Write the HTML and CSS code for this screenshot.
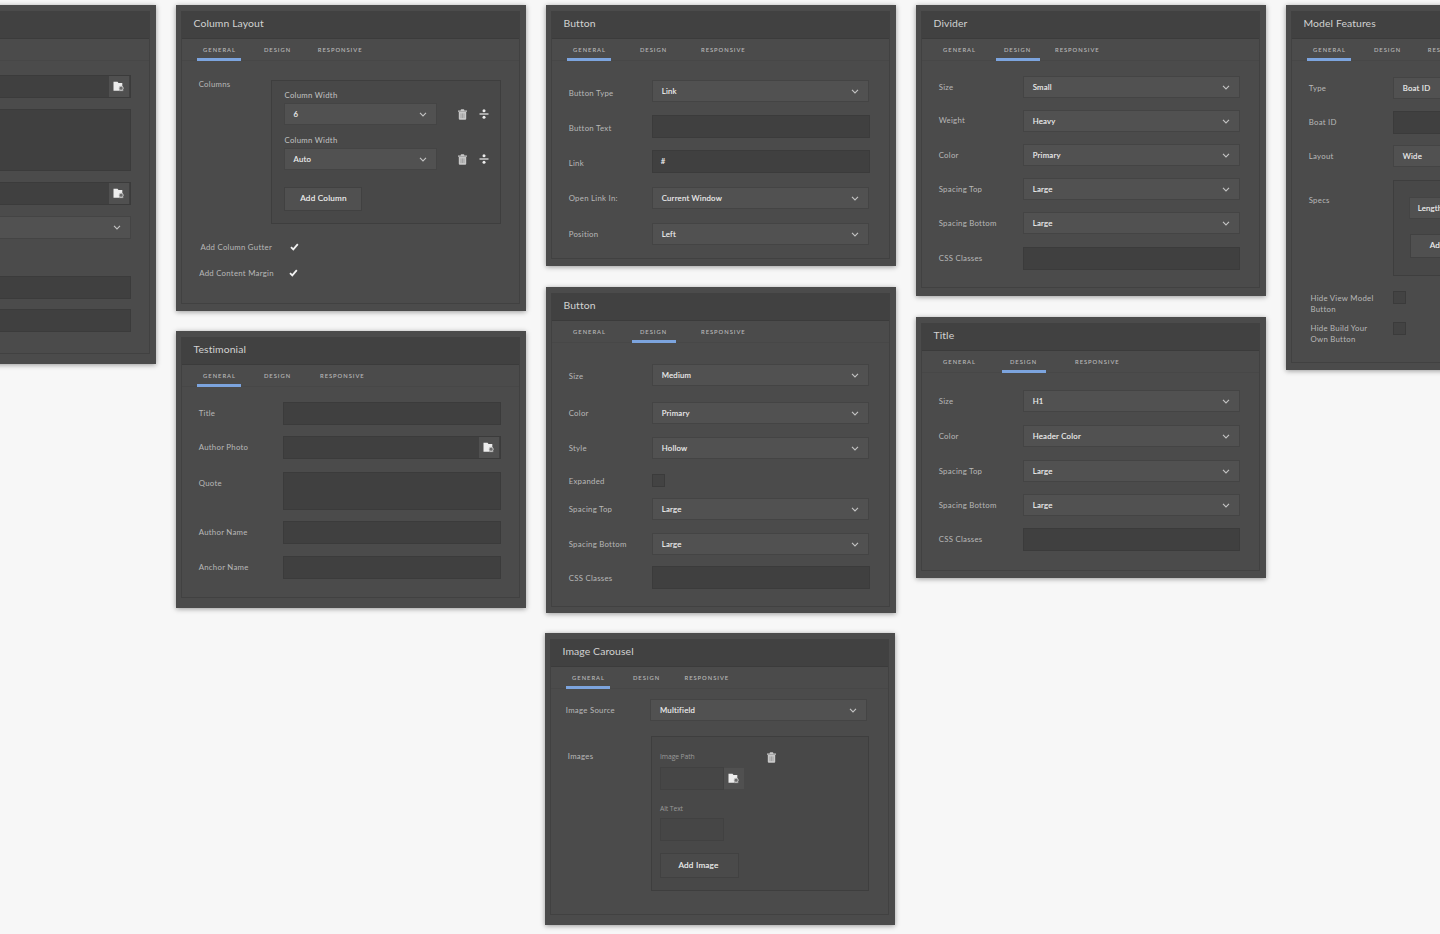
FILE: index.html
```html
<!DOCTYPE html>
<html lang="en">
<head>
<meta charset="utf-8">
<title>Component dialogs</title>
<link rel="stylesheet" href="styles.css">
</head>
<body>
<svg class="sprite" width="0" height="0" aria-hidden="true">
  <symbol id="chevron" viewBox="0 0 8 5"><path d="M1 .8 4 3.9 7 .8" fill="none" stroke="currentColor" stroke-width="1.1"/></symbol>
  <symbol id="trash" viewBox="0 0 9 11"><path d="M0 1.5h2.7V.9q0-.7.7-.7h2.2q.7 0 .7.7v.6H9v1.2H0z" fill="#c8c8c8"/><path d="M.8 3.1h7.4v6.6q0 1-1 1H1.8q-1 0-1-1z" fill="#c8c8c8"/><path d="M3 4.4v4.6M4.5 4.4v4.6M6 4.4v4.6" stroke="#8a8a8a" stroke-width=".6"/></symbol>
  <symbol id="move" viewBox="0 0 10 10"><path d="M.5 5h9" stroke="#ececec" stroke-width="1.2"/><circle cx="5" cy="1.7" r="1.5" fill="#ececec"/><circle cx="5" cy="8.3" r="1.5" fill="#ececec"/></symbol>
  <symbol id="folder" viewBox="0 0 11 11"><path d="M.5.8h4l1 1.2h3.8v4L6 6.4v3.4H.5z" fill="#ededed"/><circle cx="8.1" cy="7.2" r="2.1" fill="#6a6a6a" stroke="#d2d2d2" stroke-width=".9"/><path d="M6 9.6h4.3" stroke="#c4c4c4" stroke-width=".8"/></symbol>
  <symbol id="check" viewBox="0 0 9 8"><path d="M1 4.2 3.3 6.4 7.8 1.2" fill="none" stroke="#f2f2f2" stroke-width="1.8"/></symbol>
</svg>
<main class="board">
  <div class="stack">
    <section class="panel banner">
      <div class="frame">
        <h2 class="title"></h2><nav class="tabs"></nav>
        <div class="form">
          <div class="row"><span class="label"></span><div class="input"><span class="picker"><svg><use href="#folder"/></svg></span></div></div>
          <div class="row"><span class="label"></span><div class="input"></div></div>
          <div class="row"><span class="label"></span><div class="input"><span class="picker"><svg><use href="#folder"/></svg></span></div></div>
          <div class="row"><span class="label"></span><div class="select"><svg><use href="#chevron"/></svg></div></div>
          <div class="row"><span class="label"></span><div class="input"></div></div>
          <div class="row"><span class="label"></span><div class="input"></div></div>
        </div>
      </div>
    </section>
  </div>

  <div class="stack">
    <section class="panel columns">
      <div class="frame">
        <h2 class="title">Column Layout</h2>
        <nav class="tabs"><span class="tab on">GENERAL</span><span class="tab">DESIGN</span><span class="tab last">RESPONSIVE</span></nav>
        <div class="form">
          <div class="row"><span class="label">Columns</span>
            <div class="box">
              <div class="sub">Column Width</div>
              <div class="line"><div class="select">6<svg><use href="#chevron"/></svg></div><svg class="trash"><use href="#trash"/></svg><svg class="move"><use href="#move"/></svg></div>
              <div class="sub">Column Width</div>
              <div class="line"><div class="select">Auto<svg><use href="#chevron"/></svg></div><svg class="trash"><use href="#trash"/></svg><svg class="move"><use href="#move"/></svg></div>
              <button class="button">Add Column</button>
            </div>
          </div>
          <div class="row"><span class="label">Add Column Gutter</span><svg class="check"><use href="#check"/></svg></div>
          <div class="row"><span class="label">Add Content Margin</span><svg class="check"><use href="#check"/></svg></div>
        </div>
      </div>
    </section>
    <section class="panel testimonial">
      <div class="frame">
        <h2 class="title">Testimonial</h2>
        <nav class="tabs"><span class="tab on">GENERAL</span><span class="tab">DESIGN</span><span class="tab last">RESPONSIVE</span></nav>
        <div class="form">
          <div class="row"><span class="label">Title</span><div class="input"></div></div>
          <div class="row"><span class="label">Author Photo</span><div class="input"><span class="picker"><svg><use href="#folder"/></svg></span></div></div>
          <div class="row"><span class="label">Quote</span><div class="input"></div></div>
          <div class="row"><span class="label">Author Name</span><div class="input"></div></div>
          <div class="row"><span class="label">Anchor Name</span><div class="input"></div></div>
        </div>
      </div>
    </section>
  </div>

  <div class="stack">
    <section class="panel link-button">
      <div class="frame">
        <h2 class="title">Button</h2>
        <nav class="tabs wide"><span class="tab on">GENERAL</span><span class="tab">DESIGN</span><span class="tab last">RESPONSIVE</span></nav>
        <div class="form">
          <div class="row"><span class="label">Button Type</span><div class="select">Link<svg><use href="#chevron"/></svg></div></div>
          <div class="row"><span class="label">Button Text</span><div class="input"></div></div>
          <div class="row"><span class="label">Link</span><div class="input">#</div></div>
          <div class="row"><span class="label">Open Link In:</span><div class="select">Current Window<svg><use href="#chevron"/></svg></div></div>
          <div class="row"><span class="label">Position</span><div class="select">Left<svg><use href="#chevron"/></svg></div></div>
        </div>
      </div>
    </section>
    <section class="panel button-design">
      <div class="frame">
        <h2 class="title">Button</h2>
        <nav class="tabs wide"><span class="tab">GENERAL</span><span class="tab on">DESIGN</span><span class="tab last">RESPONSIVE</span></nav>
        <div class="form">
          <div class="row"><span class="label">Size</span><div class="select">Medium<svg><use href="#chevron"/></svg></div></div>
          <div class="row"><span class="label">Color</span><div class="select">Primary<svg><use href="#chevron"/></svg></div></div>
          <div class="row"><span class="label">Style</span><div class="select">Hollow<svg><use href="#chevron"/></svg></div></div>
          <div class="row"><span class="label">Expanded</span><span class="checkbox"></span></div>
          <div class="row"><span class="label">Spacing Top</span><div class="select">Large<svg><use href="#chevron"/></svg></div></div>
          <div class="row"><span class="label">Spacing Bottom</span><div class="select">Large<svg><use href="#chevron"/></svg></div></div>
          <div class="row"><span class="label">CSS Classes</span><div class="input"></div></div>
        </div>
      </div>
    </section>
    <section class="panel carousel">
      <div class="frame">
        <h2 class="title">Image Carousel</h2>
        <nav class="tabs"><span class="tab on">GENERAL</span><span class="tab">DESIGN</span><span class="tab last">RESPONSIVE</span></nav>
        <div class="form">
          <div class="row"><span class="label">Image Source</span><div class="select">Multifield<svg><use href="#chevron"/></svg></div></div>
          <div class="row"><span class="label">Images</span>
            <div class="box">
              <div class="head"><span class="dim">Image Path</span><svg class="trash"><use href="#trash"/></svg></div>
              <div class="pair"><div class="input faint"></div><span class="picker"><svg><use href="#folder"/></svg></span></div>
              <div class="dim">Alt Text</div>
              <div class="input faint"></div>
              <button class="button">Add Image</button>
            </div>
          </div>
        </div>
      </div>
    </section>
  </div>

  <div class="stack">
    <section class="panel divider">
      <div class="frame">
        <h2 class="title">Divider</h2>
        <nav class="tabs"><span class="tab">GENERAL</span><span class="tab on">DESIGN</span><span class="tab last">RESPONSIVE</span></nav>
        <div class="form">
          <div class="row"><span class="label">Size</span><div class="select">Small<svg><use href="#chevron"/></svg></div></div>
          <div class="row"><span class="label">Weight</span><div class="select">Heavy<svg><use href="#chevron"/></svg></div></div>
          <div class="row"><span class="label">Color</span><div class="select">Primary<svg><use href="#chevron"/></svg></div></div>
          <div class="row"><span class="label">Spacing Top</span><div class="select">Large<svg><use href="#chevron"/></svg></div></div>
          <div class="row"><span class="label">Spacing Bottom</span><div class="select">Large<svg><use href="#chevron"/></svg></div></div>
          <div class="row"><span class="label">CSS Classes</span><div class="input"></div></div>
        </div>
      </div>
    </section>
    <section class="panel heading">
      <div class="frame">
        <h2 class="title">Title</h2>
        <nav class="tabs wide"><span class="tab">GENERAL</span><span class="tab on">DESIGN</span><span class="tab last">RESPONSIVE</span></nav>
        <div class="form">
          <div class="row"><span class="label">Size</span><div class="select">H1<svg><use href="#chevron"/></svg></div></div>
          <div class="row"><span class="label">Color</span><div class="select">Header Color<svg><use href="#chevron"/></svg></div></div>
          <div class="row"><span class="label">Spacing Top</span><div class="select">Large<svg><use href="#chevron"/></svg></div></div>
          <div class="row"><span class="label">Spacing Bottom</span><div class="select">Large<svg><use href="#chevron"/></svg></div></div>
          <div class="row"><span class="label">CSS Classes</span><div class="input"></div></div>
        </div>
      </div>
    </section>
  </div>

  <div class="stack">
    <section class="panel model">
      <div class="frame">
        <h2 class="title">Model Features</h2>
        <nav class="tabs"><span class="tab on">GENERAL</span><span class="tab">DESIGN</span><span class="tab last">RESPONSIVE</span></nav>
        <div class="form">
          <div class="row"><span class="label">Type</span><div class="select">Boat ID<svg><use href="#chevron"/></svg></div></div>
          <div class="row"><span class="label">Boat ID</span><div class="input"></div></div>
          <div class="row"><span class="label">Layout</span><div class="select">Wide<svg><use href="#chevron"/></svg></div></div>
          <div class="row"><span class="label">Specs</span>
            <div class="box"><div class="select">Length</div><button class="button">Add</button></div>
          </div>
          <div class="row"><span class="label">Hide View Model<br>Button</span><span class="checkbox"></span></div>
          <div class="row"><span class="label">Hide Build Your<br>Own Button</span><span class="checkbox"></span></div>
        </div>
      </div>
    </section>
  </div>
</main>
</body>
</html>
```
FILE: styles.css
```css
* { box-sizing: border-box; }
html, body { margin: 0; height: 934px; overflow: hidden; background: #f7f7f7; }
body { font-family: Lato, "Open Sans", sans-serif; font-size: 7.8px; letter-spacing: .27px; color: #b8b8b8; }
svg { display: block; }
.sprite { position: absolute; }

.board { display: flex; gap: 20px; width: 1634px; margin-left: -194px; padding-top: 5px; overflow: hidden; height: 934px; }
.stack { width: 350px; flex: none; display: flex; flex-direction: column; }

.panel { --h: 300px; --end: 7px; height: var(--h); width: 350px; padding: 6px 6px var(--end) 5px; background: #4b4b4b; box-shadow: 0 1px 5px rgba(0,0,0,.38); flex: none; }
.frame { height: 100%; border: 1px solid #414141; }
.title { margin: 0; height: 27px; padding-left: 11.5px; line-height: 22px; font-size: 10.4px; font-weight: 400; letter-spacing: .1px; color: #d2d2d2; background: #414141; border-bottom: 1px solid #3b3b3b; }

.tabs { --design: 15px; --resp: 17.8px; display: flex; height: 22px; padding-left: 15px; border-bottom: 1px solid #474747; font-size: 5.8px; font-weight: 400; letter-spacing: 1px; line-height: 22px; color: #b8b8b8; -webkit-text-stroke: .1px currentColor; }
.tabs.wide { --design: 21px; }
.tab { width: 44px; height: 22px; padding-left: 1px; text-align: center; border-bottom: 2.5px solid transparent; white-space: nowrap; }
.tab.on { border-bottom: 3px solid #7ca4de; }
.tab + .tab { margin-left: var(--design); padding: 0 1px 0 0; }
.tab.last { margin-left: var(--resp); width: auto; padding-left: 0; }

.form { display: grid; align-content: start; padding: var(--top, 15px) 0 0 16.7px; }
.row { display: flex; align-items: flex-start; height: 100%; --ly: 5px; }
.label { flex: none; width: 84px; margin-top: calc(var(--ly) - .3px); line-height: 12px; white-space: nowrap; }

.select, .input { position: relative; width: 217px; height: 22px; padding-left: 9px; line-height: 20px; color: #f2f2f2; letter-spacing: .22px; border: 1px solid #444; white-space: nowrap; -webkit-text-stroke: .1px currentColor; }
.select { display: flex; align-items: center; padding-right: 9px; background: #515151; }
.select svg { width: 8px; height: 5px; margin-left: auto; color: #c4c4c4; }
.input { height: 23px; width: 218px; background: #404040; border-color: #3b3b3b; padding-left: 8px; line-height: 21px; }
.input .picker { position: absolute; right: 1px; top: 0; }
.picker { display: flex; align-items: center; justify-content: center; width: 20px; height: 21px; background: #505050; }
.picker svg { width: 11px; height: 11px; }
.box { background: #484848; border: 1px solid #3e3e3e; }
.trash { width: 9px; height: 11px; flex: none; }
.move { width: 10px; height: 10px; flex: none; }
.check { width: 9px; height: 8px; }
.checkbox { width: 13px; height: 13px; background: #434343; border: 1px solid #3b3b3b; }
.button { display: block; padding: 0 0 1px; font: 400 8.2px/21px Lato, sans-serif; letter-spacing: .2px; color: #f4f4f4; background: #505050; border: 1px solid #414141; -webkit-text-stroke: .1px currentColor; }
.sub { line-height: 12px; color: #c2c2c2; }
.dim { font: 400 6.8px/12px "Open Sans", sans-serif; letter-spacing: -.1px; color: #9a9a9a; }

/* First column */
.banner { --h: 359px; --end: 10px; }
.banner .form { --top: 14px; grid-template-rows: 34px 73px 34px 60px 33px 23px; }
.banner .label { width: 84px; }
.banner .row:nth-child(2) .input { height: 62px; }
.banner .select { height: 23px; width: 218px; }

/* Column layout */
.columns { --h: 306px; }
.columns .form { --top: 19px; grid-template-rows: 162px 26px 20px; }
.columns .row:nth-child(1) { --ly: -1.5px; }
.columns .row:nth-child(1) .label { width: 72.3px; }
.columns .box { width: 230px; height: 144px; padding: 8px 0 0 12.5px; }
.columns .select { width: 153px; padding-left: 8px; }
.columns .line { display: flex; align-items: center; margin: 2px 0 9px; }
.columns .line .trash { margin-left: 20.7px; }
.columns .line .move { margin-left: 12px; }
.columns .sub + .line { height: 22px; }
.columns .button { width: 78px; height: 24px; margin-top: 17px; }
.columns .row:nth-child(n+2) { --ly: -.7px; }
.columns .row:nth-child(2) .label { padding-left: 1.8px; width: 91px; }
.columns .row:nth-child(3) .label { width: 90px; padding-left: .5px; }
.columns .check { margin-top: 1px; }

/* Testimonial */
.testimonial { --h: 277px; --end: 10px; margin-top: 20px; }
.testimonial .tabs { --resp: 20px; }
.testimonial .form { grid-template-rows: 34px 36px 49px 35px 23px; }
.testimonial .row:nth-child(3) .input { height: 38px; }

/* Link button */
.link-button { --h: 261px; }
.link-button .tabs, .button-design .tabs { --resp: 25px; }
.link-button .form { --top: 19px; grid-template-rows: 35px 35px 37px 36px 23px; }
.link-button .row { --ly: 7px; }
.link-button .row:nth-child(n+4) { --ly: 5px; }
.link-button .label, .button-design .label { width: 83px; }

.button-design { --h: 326px; --end: 6px; margin-top: 21px; }
.button-design .form { --top: 21px; grid-template-rows: 38px 35px 37px 24px 35px 33px 23px; }
.button-design .row:nth-child(1) { --ly: 6px; }
.button-design .row:nth-child(4) { --ly: 1px; }
.button-design .row:nth-child(7) { --ly: 6px; }

/* Carousel */
.carousel { --h: 292px; --end: 10px; margin: 20px 0 0 -1px; }
.carousel .tabs { --resp: 15.5px; }
.carousel .form { --top: 10px; padding-left: 14.8px; grid-template-rows: 37px 155px; }
.carousel .label { width: 84.2px; }
.carousel .row:nth-child(2) { --ly: 14px; }
.carousel .row:nth-child(2) .label { padding-left: 2px; width: 85.2px; }
.carousel .box { width: 218px; height: 155px; padding: 14px 0 0 8px; }
.head { display: flex; align-items: center; height: 12px; }
.head .dim { width: 107px; }
.pair { display: flex; align-items: center; margin: 4px 0 13px; }
.faint { width: 64px; background: #464646; border-color: #414141; }
.carousel .box > .input { margin: 3px 0 12px; }
.carousel .button { width: 79px; height: 25px; background: #4a4a4a; padding-right: 2px; }

/* Divider and title */
.divider { --h: 291px; --end: 8px; }
.divider .tabs { --resp: 15px; }
.divider .form { grid-template-rows: 34px 34px 34px 34px 35px 23px; }
.divider .row:nth-child(2) { --ly: 4px; }
.heading { --h: 261px; margin-top: 21px; }
.heading .tabs { --resp: 29px; }
.heading .form { --top: 17px; grid-template-rows: 35px 35px 34px 34px 23px; }
.divider .input, .heading .input { width: 217px; }

/* Model features */
.model { --h: 365px; }
.model .form { --top: 16px; grid-template-rows: 34px 34px 35px 111px 31px 23px; }
.model .row:nth-child(4) { --ly: 14px; }
.model .row:nth-child(n+5) { --ly: 2px; }
.model .row:nth-child(6) { --ly: 1px; }
.model .row:nth-child(n+5) .label { padding-left: 1.8px; line-height: 11px; }
.model .box { width: 217px; height: 96px; padding: 16px 15px; }
.model .box .select { width: 140px; padding-left: 8px; }
.model .box .button { width: 77px; height: 24px; margin: 15px 0 0 1px; text-align: left; padding-left: 19px; }
```
